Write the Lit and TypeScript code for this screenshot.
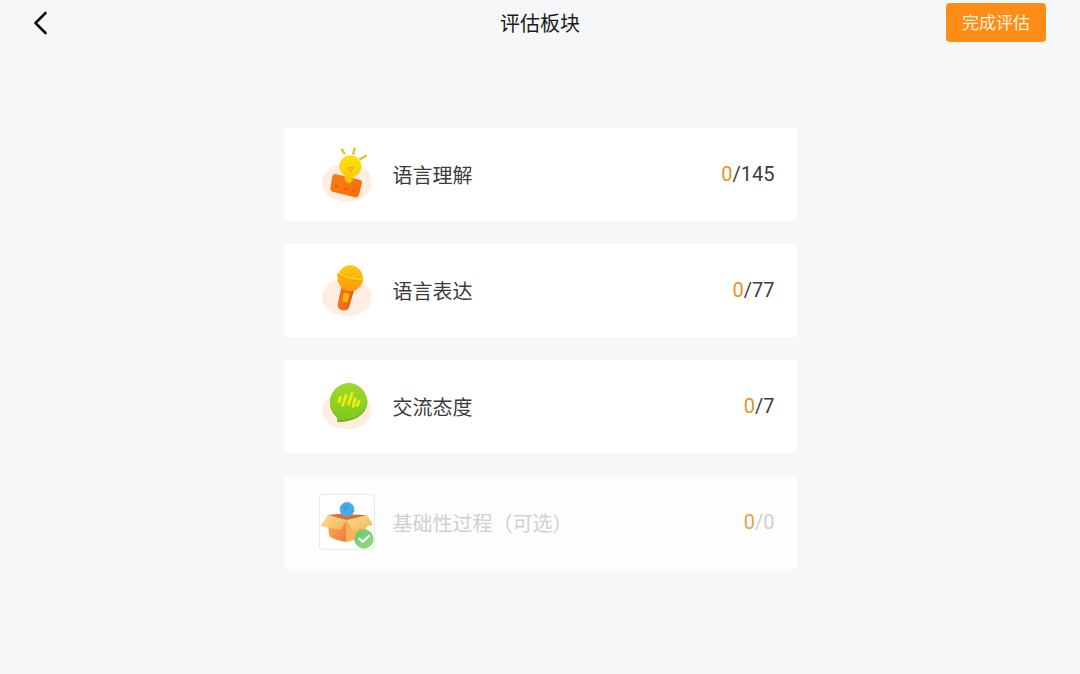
import { LitElement, html, css, type TemplateResult } from "lit";
import { customElement } from "lit/decorators.js";

interface Section {
  name: string;
  done: number;
  total: number;
  icon: TemplateResult;
  disabled?: boolean;
}

const bulbIcon = html`
  <svg class="icon" viewBox="27 27 180 183" aria-hidden="true">
    <defs>
      <linearGradient id="base" x1="0" y1="0" x2="1" y2="1">
        <stop offset="0" stop-color="#f78016" />
        <stop offset="1" stop-color="#f86a0c" />
      </linearGradient>
      <linearGradient id="bulb" x1="0" y1="0" x2="0" y2="1">
        <stop offset="0" stop-color="#fbe30c" />
        <stop offset="1" stop-color="#fdcb0b" />
      </linearGradient>
    </defs>
    <ellipse cx="111" cy="142" rx="75" ry="59" fill="#feeee2" />
    <path d="M76 117L149 134Q157 136 156 144L147 180Q144 189 135 187L67 170Q60 168 61 160L67 123Q69 116 76 117Z" fill="url(#base)" />
    <g fill="#e05a14">
      <circle cx="79" cy="155" r="4" /><circle cx="107" cy="161" r="4" /><circle cx="132" cy="168" r="4" />
    </g>
    <path d="M104 112L134 118L127 139Q118 149 108 141Q103 137 104 130Z" fill="#fcbc0b" />
    <circle cx="121" cy="94" r="33" fill="url(#bulb)" />
    <path d="M113 98L130 98L121 110Z" fill="none" stroke="#edae09" stroke-width="4" stroke-linejoin="round" />
    <path d="M120 112L117 136" stroke="#f2d012" stroke-width="7" stroke-linecap="round" />
    <path d="M96 44L103 55M134 40L130 56M168 62L151 72" stroke="#dfc527" stroke-width="7" stroke-linecap="round" />
  </svg>`;

const micIcon = html`
  <svg class="icon" viewBox="27 15 180 183" aria-hidden="true">
    <defs>
      <linearGradient id="handle" x1="0" y1="0" x2="1" y2="0">
        <stop offset="0" stop-color="#f5781a" />
        <stop offset="1" stop-color="#e8571a" />
      </linearGradient>
      <linearGradient id="head" x1="0" y1="0" x2="0" y2="1">
        <stop offset="0" stop-color="#fdc90c" />
        <stop offset="1" stop-color="#ff980c" />
      </linearGradient>
    </defs>
    <ellipse cx="111" cy="126" rx="75" ry="57" fill="#feeee2" />
    <path d="M95 94L133 103L118 155Q112 169 97 166Q81 162 83 147Z" fill="url(#handle)" />
    <path d="M103 114L117 117L112 141L98 138Z" fill="#ffb40a" stroke="#ffb40a" stroke-width="3" stroke-linejoin="round" />
    <ellipse cx="121" cy="70" rx="38" ry="39" fill="url(#head)" />
    <path d="M83 60Q105 76 157 79" fill="none" stroke="#f3a30a" stroke-width="5" stroke-linecap="round" />
    <path d="M84 55Q105 70 158 73" fill="none" stroke="#ffd010" stroke-width="5" stroke-linecap="round" />
  </svg>`;

const chatIcon = html`
  <svg class="icon" viewBox="27 18 180 183" aria-hidden="true">
    <defs>
      <linearGradient id="bubble" x1="0" y1="0" x2="0" y2="1">
        <stop offset="0" stop-color="#a0d92c" />
        <stop offset="1" stop-color="#80c91c" />
      </linearGradient>
    </defs>
    <ellipse cx="111" cy="121" rx="75" ry="57" fill="#feeee2" />
    <path d="M84 157Q80 154 82 143A56 56 0 1 1 172 100Q164 153 84 157Z" fill="#70b71b" />
    <path d="M86 150Q82 147 84 139A55 55 0 1 1 171 94Q164 149 86 150Z" fill="url(#bubble)" />
    <path d="M91 82L87 95M108 76L98 106M126 70L116 102M135 86L130 109M147 94L142 106" stroke="#edeb12" stroke-width="9" stroke-linecap="round" />
  </svg>`;

const boxIcon = html`
  <svg class="icon" viewBox="27 21 180 183" aria-hidden="true">
    <defs>
      <linearGradient id="left" x1="0" y1="0" x2="1" y2="1">
        <stop offset="0" stop-color="#fbb45f" />
        <stop offset="1" stop-color="#ee7a3c" />
      </linearGradient>
      <linearGradient id="right" x1="0" y1="0" x2="1" y2="1">
        <stop offset="0" stop-color="#f9a452" />
        <stop offset="1" stop-color="#fac764" />
      </linearGradient>
      <linearGradient id="flap" x1="0" y1="0" x2="1" y2="1">
        <stop offset="0" stop-color="#f9dc9a" />
        <stop offset="1" stop-color="#f9b54f" />
      </linearGradient>
      <linearGradient id="tick" x1="0" y1="0" x2="1" y2="1">
        <stop offset="0" stop-color="#5fc878" />
        <stop offset="1" stop-color="#9bda7c" />
      </linearGradient>
    </defs>
    <rect x="28" y="28" width="165" height="165" rx="11" fill="#fff" stroke="#e4e5e7" stroke-width="3" />
    <path d="M53 90L110 105L110 171Q75 167 58 154Q54 133 53 90Z" fill="url(#left)" />
    <path d="M110 105L172 92L166 158L110 171Z" fill="url(#right)" />
    <path d="M53 90L92 86L172 91L110 107Z" fill="#df6c39" />
    <circle cx="111" cy="73" r="22" fill="#48aee5" />
    <path d="M97 66Q108 55 119 65Q113 79 102 77ZM122 77Q128 72 131 79Q127 87 119 88Z" fill="#2f92d3" opacity=".4" />
    <path d="M53 90L110 105L93 134Q58 130 31 122Q44 108 53 90Z" fill="url(#flap)" />
    <path d="M110 105L172 91L189 119Q159 128 128 136Z" fill="url(#flap)" />
    <circle cx="162" cy="162" r="29" fill="url(#tick)" />
    <path d="M148 161L158 171L177 153" fill="none" stroke="#fff" stroke-width="6" stroke-linecap="round" stroke-linejoin="round" />
  </svg>`;

@customElement("section-card")
class SectionCard extends LitElement {
  static properties = { section: { attribute: false } };
  declare section: Section;

  static styles = css`
    :host { display: block; }
    .card {
      display: flex;
      align-items: center;
      width: 100%;
      padding: 16px 22px 16px 35px;
      border: 0;
      border-radius: 3px;
      background: #fff;
      color: #3c3c3c;
      font: 20px/24px Roboto, "Noto Sans CJK SC", sans-serif;
      text-align: left;
      cursor: pointer;
    }
    .card:disabled { background: #fdfdfe; color: #d0d0d0; cursor: default; }
    .icon { flex: none; display: block; width: 60px; height: 61px; }
    .name { flex: 1; margin-left: 14px; padding-top: 2px; }
    .count { padding-bottom: 2px; }
    .done { color: #e2942a; }
    .card:disabled .done { color: #e9a23f; }
  `;

  render() {
    const s = this.section;
    return html`
      <button class="card" type="button" ?disabled=${s.disabled}>
        ${s.icon}
        <span class="name">${s.name}</span>
        <span class="count"><span class="done">${s.done}</span>/${s.total}</span>
      </button>`;
  }
}

@customElement("app-root")
class AppRoot extends LitElement {
  static properties = { sections: { state: true } };
  declare sections: Section[];

  constructor() {
    super();
    this.sections = [
      { name: "语言理解", done: 0, total: 145, icon: bulbIcon },
      { name: "语言表达", done: 0, total: 77, icon: micIcon },
      { name: "交流态度", done: 0, total: 7, icon: chatIcon },
      { name: "基础性过程（可选）", done: 0, total: 0, icon: boxIcon, disabled: true },
    ];
  }

  static styles = css`
    :host {
      display: block;
      min-height: 100vh;
      background: #f5f7f9;
      font-family: Roboto, "Noto Sans CJK SC", sans-serif;
    }
    .bar {
      display: grid;
      grid-template-columns: 1fr auto 1fr;
      align-items: center;
      padding: 3px 34px 4px;
    }
    .back {
      justify-self: start;
      display: flex;
      padding: 0;
      border: 0;
      background: none;
      cursor: pointer;
    }
    .title {
      margin: 0;
      padding-top: 3px;
      font-size: 20px;
      line-height: 24px;
      font-weight: 400;
      color: #1b1b1b;
    }
    .finish {
      justify-self: end;
      padding: 7px 16px 8px;
      border: 0;
      border-radius: 4px;
      background: #ff8c16;
      color: #fff3dc;
      font: 17px/24px "Noto Sans CJK SC", sans-serif;
      cursor: pointer;
    }
    .list {
      display: grid;
      gap: 23px;
      box-sizing: border-box;
      max-width: 513px;
      margin: 82px auto 0;
      padding: 0;
      list-style: none;
    }
  `;

  render() {
    return html`
      <header class="bar">
        <button class="back" type="button" aria-label="返回">
          <svg width="14" height="24" viewBox="0 0 14 24" fill="none" stroke="#111" stroke-width="2.6" stroke-linecap="round" stroke-linejoin="round">
            <path d="M11.5 2L1.5 12L11.5 22" />
          </svg>
        </button>
        <h1 class="title">评估板块</h1>
        <button class="finish" type="button">完成评估</button>
      </header>
      <main>
        <ul class="list">
          ${this.sections.map((s) => html`<li><section-card .section=${s}></section-card></li>`)}
        </ul>
      </main>`;
  }
}
